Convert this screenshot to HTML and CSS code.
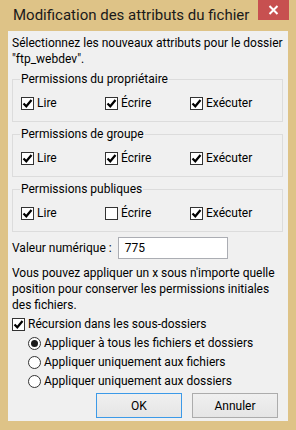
FILE: index.html
```html
<!DOCTYPE html>
<html lang="fr">
<head>
    <meta charset="UTF-8">
    <title>Modification des attributs du fichier</title>
    <link rel="stylesheet" href="styles.css">
</head>
<body>
    <div class="window">
        <!-- Title bar -->
        <div class="titlebar">
            <span class="title">Modification des attributs du fichier</span>
            <span class="close">
                <svg width="11" height="10" viewBox="0 0 11 10"><path d="M1.5 1 L9.5 9 M9.5 1 L1.5 9" stroke="#fff" stroke-width="2"/></svg>
            </span>
        </div>

        <div class="client">
            <p class="intro">Sélectionnez les nouveaux attributs pour le dossier "ftp_webdev".</p>

            <fieldset class="group">
                <legend>Permissions du propriétaire</legend>
                <div class="row">
                    <label class="check"><span class="box on"></span>Lire</label>
                    <label class="check"><span class="box on"></span>Écrire</label>
                    <label class="check"><span class="box on"></span>Exécuter</label>
                </div>
            </fieldset>

            <fieldset class="group">
                <legend>Permissions de groupe</legend>
                <div class="row">
                    <label class="check"><span class="box on"></span>Lire</label>
                    <label class="check"><span class="box on"></span>Écrire</label>
                    <label class="check"><span class="box on"></span>Exécuter</label>
                </div>
            </fieldset>

            <fieldset class="group">
                <legend>Permissions publiques</legend>
                <div class="row">
                    <label class="check"><span class="box on"></span>Lire</label>
                    <label class="check"><span class="box"></span>Écrire</label>
                    <label class="check"><span class="box on"></span>Exécuter</label>
                </div>
            </fieldset>

            <div class="numeric">
                <span>Valeur numérique :</span>
                <span class="field">775</span>
            </div>

            <p class="hint">Vous pouvez appliquer un x sous n'importe quelle position pour conserver les permissions initiales des fichiers.</p>

            <label class="check recurse"><span class="box on"></span>Récursion dans les sous-dossiers</label>

            <div class="radios">
                <label class="radio"><span class="dot on"></span>Appliquer à tous les fichiers et dossiers</label>
                <label class="radio"><span class="dot"></span>Appliquer uniquement aux fichiers</label>
                <label class="radio"><span class="dot"></span>Appliquer uniquement aux dossiers</label>
            </div>

            <div class="buttons">
                <button class="btn default">OK</button>
                <button class="btn">Annuler</button>
            </div>
        </div>
    </div>
</body>
</html>
```

FILE: styles.css
```css
/* Windows 8 style dialog */
body {
    margin: 0;
    background-color: #dec387;
    font-family: Roboto, "Noto Sans", sans-serif;
    font-size: 12px;
    color: #000;
}
.window {
    width: 296px;
    height: 430px;
}
.titlebar {
    height: 31px;
    display: flex;
    justify-content: space-between;
    align-items: flex-start;
}
.title {
    padding: 5px 0 0 13px;
    font-size: 15px;
    line-height: 20px;
    color: #1a1a1a;
    white-space: nowrap;
}
.close {
    width: 31px;
    height: 20px;
    margin-right: 7px;
    background-color: #c75050;
    display: flex;
    align-items: center;
    justify-content: center;
}
.client {
    margin: 0 8px;
    height: 390px;
    background-color: #f0f0f0;
    padding: 4px 5px 0 4px;
    box-sizing: border-box;
    line-height: 16px;
}
.intro {
    margin: 0 0 4px;
}
.group {
    margin: 0 0 4px;
    padding: 0 8px;
    height: 51px;
    box-sizing: border-box;
    border: 1px solid #dcdcdc;
}
.group legend {
    padding: 0 1px;
    margin-left: -1px;
}
.row {
    display: grid;
    grid-template-columns: 84px 85px auto;
    margin-top: 8px;
}
.check, .radio {
    display: flex;
    align-items: center;
    gap: 3px;
}
.box {
    width: 11px;
    height: 11px;
    border: 1px solid #333;
    background: #fff;
    display: inline-block;
}
.box.on {
    background: #fff url("data:image/svg+xml;utf8,<svg xmlns='http://www.w3.org/2000/svg' width='11' height='11'><path d='M1.5 5.5 L4.3 8.3 L9.5 2' fill='none' stroke='black' stroke-width='2.2'/></svg>") no-repeat center;
}
.numeric {
    display: flex;
    align-items: center;
    gap: 6px;
    margin-top: 5px;
}
.field {
    width: 102px;
    height: 20px;
    border: 1px solid #abadb3;
    background: #fff;
    padding-left: 6px;
    line-height: 20px;
    box-sizing: content-box;
}
.hint {
    margin: 6px 0 3px;
}
.radios {
    margin: 3px 0 0 16px;
    display: flex;
    flex-direction: column;
    gap: 3px;
}
.dot {
    width: 11px;
    height: 11px;
    border: 1px solid #333;
    border-radius: 50%;
    background: #fff;
    display: inline-block;
    position: relative;
}
.dot.on::after {
    content: "";
    position: absolute;
    left: 2px;
    top: 2px;
    width: 7px;
    height: 7px;
    border-radius: 50%;
    background: #1a1a1a;
}
.buttons {
    display: flex;
    justify-content: flex-end;
    gap: 10px;
    margin: 4px 5px 0 0;
}
.btn {
    width: 86px;
    height: 25px;
    font-family: inherit;
    font-size: 12px;
    border: 1px solid #acacac;
    background: linear-gradient(#f0f0f0, #e5e5e5);
    color: #000;
    padding: 0;
}
.btn.default {
    border-color: #3c9ae8;
}
```
